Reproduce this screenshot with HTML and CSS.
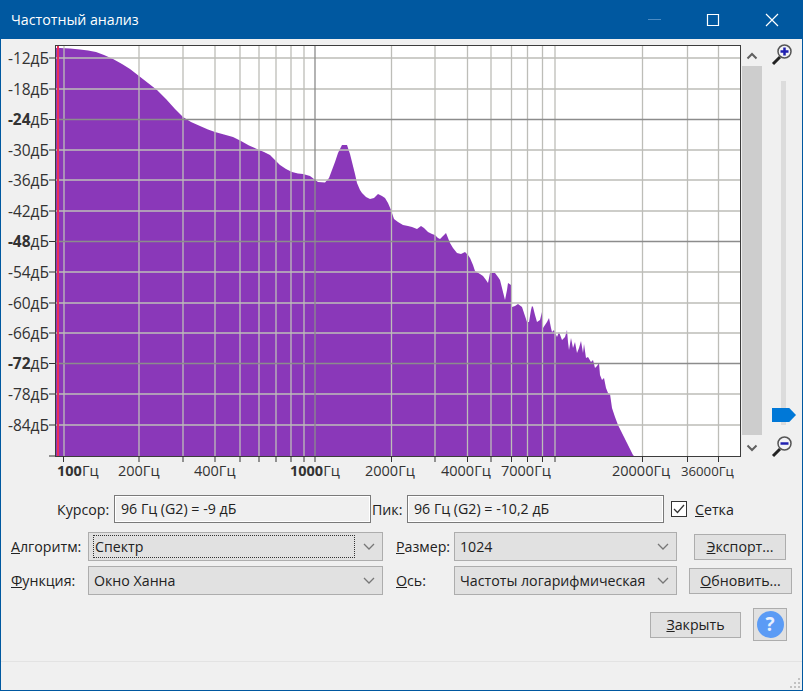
FILE: index.html
```html
<!DOCTYPE html>
<html lang="ru">
<head>
	<meta charset="UTF-8">
	<meta name="viewport" content="width=device-width, initial-scale=1.0">
	<title>Частотный анализ</title>
	<link rel="stylesheet" href="styles.css">
</head>
<body>
	<div class="window">
		<div class="titlebar">
			<span class="title">Частотный анализ</span>
			<svg class="caption" width="160" height="39" viewBox="643 0 160 39">
				<path class="cap-min" d="M648 19.5H661"/>
				<path class="cap-btn" d="M707.5 14.500H718.500V25.500H707.500Z"/>
				<path class="cap-btn" d="M766 14L778 26M778 14L766 26"/>
			</svg>
		</div>

		<div class="top">
			<svg class="plot" width="741" height="445" viewBox="1 39 741 445">
				<rect class="plot-bg" x="55" y="46" width="685" height="410"/>
				<polygon class="spectrum" points="56,456 56,48 60,48 70,48.500 80,49.500 88,50.500 96,52 104,55 113,59 122,64 130,69 139,76 148,83 157,90 166,99 175,109 183,117 191,122 200,126 208,129.500 215,132 224,134.500 233,137 241,141 249,145.500 257,149 264,152 270,155 275,160 280,165 286,169 292,172 298,173.500 303,174 310,176 314,179 318,182 325,182.500 329,178 332,170 335,162 338,153 342,145 347,145 350,154 352,162 355,174 357,183 360,190 362,193 366,197 370,199 374,198 378,194 382,196 385,198 388,203 391,210 394,219 398,222 403,225 408,226 412,227 417,229 421,226 424,228 428,232 432,234 435,235 438,238 440,239 443,236 446,233 448,238 450,243 453,248 457,253 461,254 465,252 468,255 470,258 473,265 475,271 480,274 483,276 486,280 488,283 490,273 495,273 498,277 500,280 502,288 505,300 507,290 508,283 511,285 512,307 515,306 518,304 522,307 525,316 527,322 529,322 531,310 532,306 533,307 535,315 537,322 540,320 542,312 543,328 545,325 547,322 549,318 551,328 552,332 554,330 557,337 559,332 562,340 565,337 567,330 568,342 569,350 571,338 573,348 575,342 577,353 579,348 581,341 583,353 584,344 586,358 588,357 591,362 593,360 595,368 597,366 599,363 600,375 602,380 604,378 606,388 608,393 610,394 612,408 615,417 618,425 621,431 624,437 627,443 630,449 633,455 634,456"/>
				<path class="grid" d="M55 58H740M55 89H740M55 150H740M55 180H740M55 211H740M55 272H740M55 303H740M55 333H740M55 394H740M55 425H740"/>
				<path class="grid" d="M64 46V456M139 46V456M183 46V456M215 46V456M240 46V456M259 46V456M276 46V456M291 46V456M304 46V456M391.500 46V456M435 46V456M467.500 46V456M491 46V456M511.500 46V456M527.500 46V456M542.500 46V456M555 46V456M642.500 46V456M687.500 46V456M718.500 46V456"/>
				<path class="grid-major" d="M55 119.500H740M55 241.500H740M55 363.500H740M315 46V456"/>
				<path class="marker" d="M58 46V456"/>
				<rect class="frame" x="55.500" y="45.500" width="685" height="411"/>
				<path class="ticks" d="M49 58H55M49 89H55M49 119.500H55M49 150H55M49 180H55M49 211H55M49 241.500H55M49 272H55M49 303H55M49 333H55M49 363.500H55M49 394H55M49 425H55M49 456H55"/>
				<path class="ticks" d="M63.500 456V462M139 456V462M183 456V462M215 456V462M240 456V462M259 456V462M276 456V462M291 456V462M304 456V462M315 456V462M391.500 456V462M435 456V462M467.500 456V462M491 456V462M511.500 456V462M527.500 456V462M542.500 456V462M555 456V462M642.500 456V462M687.500 456V462M718.500 456V462"/>
				<g class="labels-y">
					<text x="49" y="64">-12дБ</text>
					<text x="49" y="95">-18дБ</text>
					<text x="49" y="125"><tspan class="strong">-24</tspan>дБ</text>
					<text x="49" y="156">-30дБ</text>
					<text x="49" y="186">-36дБ</text>
					<text x="49" y="217">-42дБ</text>
					<text x="49" y="247"><tspan class="strong">-48</tspan>дБ</text>
					<text x="49" y="278">-54дБ</text>
					<text x="49" y="309">-60дБ</text>
					<text x="49" y="339">-66дБ</text>
					<text x="49" y="369"><tspan class="strong">-72</tspan>дБ</text>
					<text x="49" y="400">-78дБ</text>
					<text x="49" y="431">-84дБ</text>
				</g>
				<g class="labels-x">
					<text x="57" y="476"><tspan class="strong">100</tspan>Гц</text>
					<text x="118" y="476">200Гц</text>
					<text x="194" y="476">400Гц</text>
					<text x="290" y="476"><tspan class="strong">1000</tspan>Гц</text>
					<text x="365" y="476">2000Гц</text>
					<text x="441" y="476">4000Гц</text>
					<text x="501" y="476">7000Гц</text>
					<text x="612" y="476">20000Гц</text>
					<text class="label-last" x="681" y="476">36000Гц</text>
				</g>
			</svg>

			<div class="scrollbar">
				<svg class="arrow" width="12" height="8" viewBox="0 0 12 8"><path d="M1.500 6.500L6 2L10.500 6.500"/></svg>
				<div class="scroll-thumb"></div>
				<svg class="arrow" width="12" height="8" viewBox="0 0 12 8"><path d="M1.500 1.500L6 6L10.500 1.500"/></svg>
			</div>

			<div class="zoom">
				<svg width="22" height="24" viewBox="0 0 22 24">
					<path class="lens-handle" d="M2 21L9 14"/>
					<circle class="lens" cx="13.500" cy="8.500" r="6.500"/>
					<path class="lens-mark" d="M9.500 8.500H17.500M13.500 4.500V12.500"/>
				</svg>
				<div class="slider">
					<div class="slider-track"></div>
					<div class="slider-thumb"></div>
				</div>
				<svg width="22" height="24" viewBox="0 0 22 24">
					<path class="lens-handle" d="M2 21L9 14"/>
					<circle class="lens" cx="13.500" cy="8.500" r="6.500"/>
					<path class="lens-mark" d="M9.500 8.500H17.500"/>
				</svg>
			</div>
		</div>

		<div class="row readout">
			<span class="label label-cursor">Курсор:</span>
			<div class="field">96 Гц (G2) = -9 дБ</div>
			<span class="label label-peak">Пик:</span>
			<div class="field">96 Гц (G2) = -10,2 дБ</div>
			<svg class="check" width="16" height="16" viewBox="0 0 16 16">
				<rect x=".5" y=".5" width="15" height="15"/>
				<path d="M3 8L6.500 11.500L13 4"/>
			</svg>
			<span class="label"><u>С</u>етка</span>
		</div>

		<div class="row">
			<span class="label label-left"><u>А</u>лгоритм:</span>
			<div class="select select-left"><span class="focus">Спектр</span><svg class="chevron" width="12" height="7" viewBox="0 0 12 7"><path d="M1 1L6 6L11 1"/></svg></div>
			<span class="label label-right"><u>Р</u>азмер:</span>
			<div class="select select-right"><span class="value">1024</span><svg class="chevron" width="12" height="7" viewBox="0 0 12 7"><path d="M1 1L6 6L11 1"/></svg></div>
			<div class="btn btn-export"><span><u>Э</u>кспорт...</span></div>
		</div>

		<div class="row row-second">
			<span class="label label-left"><u>Ф</u>ункция:</span>
			<div class="select select-left"><span class="value">Окно Ханна</span><svg class="chevron" width="12" height="7" viewBox="0 0 12 7"><path d="M1 1L6 6L11 1"/></svg></div>
			<span class="label label-right"><u>О</u>сь:</span>
			<div class="select select-right"><span class="value">Частоты логарифмическая</span><svg class="chevron" width="12" height="7" viewBox="0 0 12 7"><path d="M1 1L6 6L11 1"/></svg></div>
			<div class="btn btn-update"><span><u>О</u>бновить...</span></div>
		</div>

		<div class="actions">
			<div class="btn btn-close"><span><u>З</u>акрыть</span></div>
			<div class="btn btn-help"><span class="help-dot">?</span></div>
		</div>

		<div class="statusbar">
			<svg class="grip" width="12" height="12" viewBox="0 0 12 12">
				<path d="M9 1h2v2h-2zM5 5h2v2h-2zM9 5h2v2h-2zM1 9h2v2h-2zM5 9h2v2h-2zM9 9h2v2h-2z"/>
			</svg>
		</div>
	</div>
</body>
</html>
```

FILE: styles.css
```css
* {
	box-sizing: border-box;
}
html, body {
	margin: 0;
	padding: 0;
}
body {
	font-family: "Open Sans", "Liberation Sans", sans-serif;
	font-size: 14.200px;
	color: #222;
	background: #f0f0f0;
}
.window {
	position: relative;
	width: 803px;
	height: 691px;
	border: 1px solid #0058a0;
	border-top: 0;
	background: #f0f0f0;
	overflow: hidden;
}
.titlebar {
	display: flex;
	justify-content: space-between;
	align-items: center;
	height: 39px;
	margin: 0 -1px;
	padding-left: 11px;
	background: #0058a0;
	color: #fff;
	font-size: 14.200px;
}
.caption {
	display: block;
}
.cap-btn {
	fill: none;
	stroke: #fff;
	stroke-width: 1.200;
}
.cap-min {
	fill: none;
	stroke: #4d8cc4;
	stroke-width: 1;
}

/* plot */
.top {
	display: flex;
	height: 445px;
}
.plot {
	display: block;
	flex: none;
}
.plot-bg {
	fill: #fff;
}
.spectrum {
	fill: #8a38b9;
}
.grid {
	fill: none;
	stroke: #bdbdb8;
	stroke-width: 1.300;
}
.grid-major {
	fill: none;
	stroke: #8c8c8c;
	stroke-width: 1.300;
}
.marker {
	fill: none;
	stroke: #e8305a;
	stroke-width: 2;
}
.frame {
	fill: none;
	stroke: #3c3c3c;
	stroke-width: 1;
}
.ticks {
	fill: none;
	stroke: #333;
	stroke-width: 1;
}
.labels-y text,
.labels-x text {
	font-family: "Open Sans", "Liberation Sans", sans-serif;
	fill: #333;
}
.labels-x text {
	font-size: 14.500px;
}
.labels-x .label-last {
	font-size: 13.200px;
}
.labels-y text {
	font-size: 15.500px;
	text-anchor: end;
}
.strong {
	font-weight: 700;
}

/* scrollbar and zoom */
.scrollbar {
	display: flex;
	flex-direction: column;
	align-items: center;
	width: 20px;
	padding-top: 13px;
}
.scroll-thumb {
	width: 20px;
	height: 369px;
	margin: 6px 0 9px;
	background: #cdcdcd;
}
.arrow {
	flex: none;
}
.arrow path {
	fill: none;
	stroke: #606060;
	stroke-width: 2;
}
.zoom {
	display: flex;
	flex-direction: column;
	align-items: center;
	width: 40px;
	padding-top: 4px;
}
.slider {
	position: relative;
	flex: none;
	width: 26px;
	height: 344px;
	margin: 14px 0 10px;
}
.slider-track {
	width: 5px;
	height: 100%;
	margin-left: 12px;
	background: #dcdcdc;
}
.slider-thumb {
	position: absolute;
	left: 3px;
	top: 327px;
	width: 24px;
	height: 14px;
	background: #0078d7;
	clip-path: polygon(0 0, 72% 0, 100% 50%, 72% 100%, 0 100%);
}
.lens {
	fill: #f2f2f6;
	stroke: #555;
	stroke-width: 1.500;
}
.lens-handle {
	fill: none;
	stroke: #222;
	stroke-width: 3;
}
.lens-mark {
	fill: none;
	stroke: #2020b0;
	stroke-width: 2.500;
}

/* controls */
.row {
	display: flex;
	align-items: center;
	height: 29px;
	margin-top: 9px;
	padding-left: 10px;
}
.row-second {
	margin-top: 5px;
}
.readout {
	height: 28px;
	margin-top: 11px;
	padding-left: 56px;
}
.label {
	white-space: nowrap;
}
.label-cursor {
	width: 57px;
}
.label-peak {
	width: 36px;
	padding-left: 1px;
}
.label-left {
	width: 77px;
}
.label-right {
	width: 58px;
	margin-left: 13px;
}
.field {
	width: 257px;
	height: 28px;
	padding: 0 6px;
	border: 1px solid #7a7a7a;
	box-shadow: inset 0 0 0 1px #fff;
	background: #f0f0f0;
	line-height: 25px;
}
.check {
	flex: none;
	margin: 0 8px 0 7px;
}
.check rect {
	fill: #fff;
	stroke: #333;
}
.check path {
	fill: none;
	stroke: #333;
	stroke-width: 1.300;
}
.select {
	display: flex;
	align-items: center;
	justify-content: space-between;
	height: 29px;
	padding: 0 7px 0 4px;
	border: 1px solid #adadad;
	background: #e1e1e1;
}
.select-left {
	width: 295px;
}
.select-right {
	width: 223px;
}
.focus {
	flex: 1;
	height: 23px;
	margin-right: 8px;
	padding-left: 1px;
	border: 1px dotted #333;
	line-height: 21px;
}
.value {
	padding-left: 1px;
}
.chevron {
	flex: none;
}
.chevron path {
	fill: none;
	stroke: #777;
	stroke-width: 1.300;
}
.btn {
	display: flex;
	align-items: center;
	justify-content: center;
	height: 26px;
	border: 1px solid #adadad;
	background: #e1e1e1;
}
.btn-export {
	width: 92px;
	margin-left: 17px;
}
.btn-update {
	width: 103px;
	margin-left: 12px;
}
.actions {
	display: flex;
	justify-content: flex-end;
	align-items: center;
	gap: 12px;
	height: 33px;
	margin-top: 13px;
	padding-right: 15px;
}
.btn-close {
	width: 91px;
}
.btn-help {
	width: 34px;
	height: 33px;
}
.help-dot {
	display: block;
	width: 27px;
	height: 27px;
	border-radius: 50%;
	background: #5b9bf5;
	color: #e8f0ff;
	font-size: 19px;
	font-weight: 700;
	line-height: 27px;
	text-align: center;
}
.statusbar {
	height: 29px;
	margin-top: 20px;
	border-top: 1px solid #e3e3e3;
}
.grip {
	position: absolute;
	right: 1px;
	bottom: 1px;
	fill: #c2c2c2;
}
```
